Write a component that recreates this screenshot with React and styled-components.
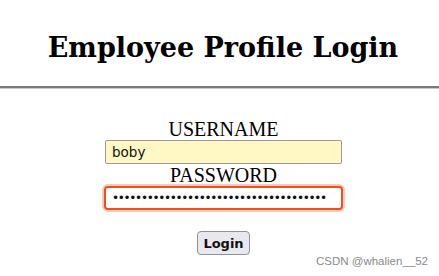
import React, { useState } from "react";
import styled, { createGlobalStyle } from "styled-components";

const GlobalStyle = createGlobalStyle`
  html, body {
    margin: 0;
    padding: 0;
    background: #ffffff;
  }
  body {
    font-family: "Liberation Serif", serif;
  }
`;

function App() {
  const [username, setUsername] = useState("boby");
  const [password, setPassword] = useState("•".repeat(37));

  return (
    <Page>
      <GlobalStyle />
      <Title>Employee Profile Login</Title>
      <Rule />
      <Form onSubmit={(e) => e.preventDefault()}>
        <Label>USERNAME</Label>
        <Input
          type="text"
          value={username}
          $autofill
          onChange={(e) => setUsername(e.target.value)}
        />
        <Label>PASSWORD</Label>
        <Input
          type="text"
          value={password}
          $focused
          $dots
          onChange={(e) => setPassword(e.target.value)}
        />
        <LoginButton type="submit">Login</LoginButton>
      </Form>
      <Watermark>CSDN @whalien__52</Watermark>
    </Page>
  );
}

export default App;

const Page = styled.div`
  position: relative;
  width: 439px;
  height: 276px;
  overflow: hidden;
`;

const Title = styled.h1`
  margin: 0;
  padding: 32px 0 0 7px;
  text-align: center;
  font-family: "DejaVu Serif", serif;
  font-size: 27px;
  font-weight: bold;
  line-height: 31px;
  color: #000;
`;

const Rule = styled.div`
  margin-top: 23px;
  height: 2px;
  background: #7a7a7a;
  border-bottom: 1px solid #c8c8c8;
`;

const Form = styled.form`
  display: flex;
  flex-direction: column;
  align-items: center;
  padding-left: 8px;
  padding-top: 30px;
`;

const Label = styled.div`
  font-family: "Liberation Serif", serif;
  font-size: 20px;
  line-height: 20px;
  color: #000;
  margin-bottom: 1px;
`;

const Input = styled.input`
  box-sizing: border-box;
  width: ${(p) => (p.$focused ? "239px" : "237px")};
  height: 24px;
  margin: ${(p) => (p.$focused ? "0" : "0 0 1px")};
  padding: 0 6px;
  font-family: "DejaVu Sans", sans-serif;
  font-size: ${(p) => (p.$dots ? "12px" : "13.5px")};
  letter-spacing: ${(p) => (p.$dots ? "-1.3px" : "0")};
  color: #111;
  background: ${(p) => (p.$autofill ? "#fff8c4" : "#ffffff")};
  border: ${(p) => (p.$focused ? "2px solid #e8521f" : "1px solid #9a9a9a")};
  border-radius: ${(p) => (p.$focused ? "4px" : "2px")};
  box-shadow: ${(p) => (p.$focused ? "0 0 0 2px #ffc9b8" : "none")};
  outline: none;
`;

const LoginButton = styled.button`
  margin-top: 21px;
  height: 24px;
  padding: 0 5px;
  font-family: "DejaVu Sans", sans-serif;
  font-size: 13px;
  font-weight: 600;
  color: #111;
  background: #e9e9ed;
  border: 1px solid #8f8f9d;
  border-radius: 4px;
  cursor: pointer;
`;

const Watermark = styled.div`
  position: absolute;
  right: 11px;
  bottom: 9px;
  font-family: "Liberation Sans", sans-serif;
  font-size: 11.5px;
  color: #8a8a8a;
`;
